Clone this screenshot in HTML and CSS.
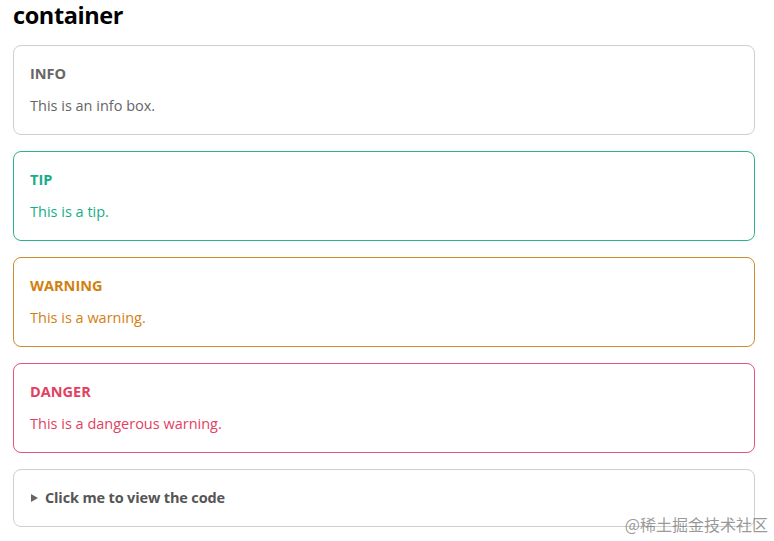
FILE: index.html
```html
<!DOCTYPE html>
<html lang="en">
<head>
<meta charset="utf-8">
<title>container</title>
<link rel="stylesheet" href="styles.css">
</head>
<body>
<h1 class="page-title">container</h1>
<div class="stack">
  <div class="box box-info">
    <p class="box-title">INFO</p>
    <p class="box-text">This is an info box.</p>
  </div>
  <div class="box box-tip">
    <p class="box-title">TIP</p>
    <p class="box-text">This is a tip.</p>
  </div>
  <div class="box box-warning">
    <p class="box-title">WARNING</p>
    <p class="box-text">This is a warning.</p>
  </div>
  <div class="box box-danger">
    <p class="box-title">DANGER</p>
    <p class="box-text">This is a dangerous warning.</p>
  </div>
  <details class="box box-details">
    <summary class="summary"><span class="marker"></span>Click me to view the code</summary>
  </details>
</div>
<div class="watermark">@稀土掘金技术社区</div>
</body>
</html>
```

FILE: styles.css
```css
html, body {
  margin: 0;
  padding: 0;
  background: #fff;
}
body {
  padding: 0 19px 0 13px;
  font-family: "Open Sans", "Noto Sans", "Liberation Sans", "Noto Sans CJK SC", sans-serif;
  position: relative;
  height: 541px;
  box-sizing: border-box;
  overflow: hidden;
}
.page-title {
  margin: 0 0 15px;
  font-size: 23.5px;
  line-height: 30px;
  font-weight: 700;
  color: #000;
  letter-spacing: -0.4px;
}
.stack {
  display: flex;
  flex-direction: column;
  gap: 16px;
}
.box {
  border: 1px solid #cfcfcf;
  border-radius: 8px;
  padding: 16px;
  color: #666;
}
.box p { margin: 0; }
.box-title {
  font-size: 14.5px;
  line-height: 24px;
  font-weight: 700;
}
.box-text {
  margin-top: 8px !important;
  font-size: 14.5px;
  line-height: 24px;
}
.box-tip { border-color: #2bb391; color: #16ad88; }
.box-warning { border-color: #cf8a2c; color: #d4800f; }
.box-danger { border-color: #e0577a; color: #e2415f; }
.box-details { color: #555; }
.summary {
  list-style: none;
  font-size: 14.5px;
  line-height: 24px;
  font-weight: 700;
  letter-spacing: -0.15px;
  display: flex;
  align-items: center;
  cursor: pointer;
}
.summary::-webkit-details-marker { display: none; }
.marker {
  width: 0;
  height: 0;
  border-top: 4px solid transparent;
  border-bottom: 4px solid transparent;
  border-left: 7px solid #666;
  margin: 0 7px 0 1px;
}
.watermark {
  position: absolute;
  right: 6px;
  bottom: 7px;
  font-family: "Noto Sans CJK SC", sans-serif;
  font-size: 16px;
  line-height: 19px;
  color: rgba(120,120,120,0.75);
}
```
